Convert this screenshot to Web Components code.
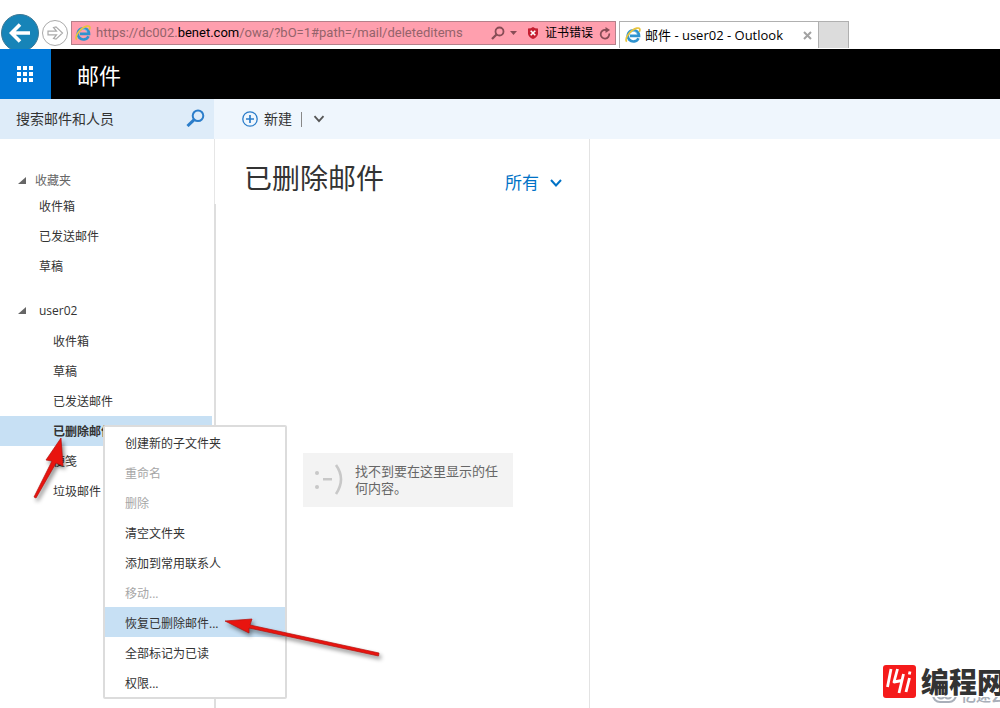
<!DOCTYPE html>
<html lang="zh-CN">
<head>
<meta charset="utf-8">
<title>邮件 - user02 - Outlook</title>
<style>
  html { height: 100%; }
  body {
    margin: 0; min-height: 100%; position: relative; overflow-x: hidden;
    display: flex; flex-direction: column; background: #fff; color: #333;
    font: 12px/20px "Open Sans", "Noto Sans CJK SC", sans-serif;
  }
  main { flex: 1; display: flex; }
</style>
</head>
<body>
<browser-bar>
  <address-bar slot="address"></address-bar>
  <browser-tab slot="tabs">邮件 - user02 - Outlook</browser-tab>
</browser-bar>
<app-header>邮件</app-header>
<command-bar></command-bar>
<main>
  <folder-pane>
    <folder-group label="收藏夹" muted>
      <folder-item>收件箱</folder-item>
      <folder-item>已发送邮件</folder-item>
      <folder-item>草稿</folder-item>
    </folder-group>
    <folder-group label="user02" nested>
      <folder-item>收件箱</folder-item>
      <folder-item>草稿</folder-item>
      <folder-item>已发送邮件</folder-item>
      <folder-item selected>已删除邮件</folder-item>
      <folder-item>便笺</folder-item>
      <folder-item>垃圾邮件</folder-item>
    </folder-group>
  </folder-pane>
  <message-list><span slot="title">已删除邮件</span>找不到要在这里显示的任何内容。</message-list>
</main>
<context-menu>
  <menu-option>创建新的子文件夹</menu-option>
  <menu-option disabled>重命名</menu-option>
  <menu-option disabled>删除</menu-option>
  <menu-option>清空文件夹</menu-option>
  <menu-option>添加到常用联系人</menu-option>
  <menu-option disabled>移动...</menu-option>
  <menu-option active>恢复已删除邮件...</menu-option>
  <menu-option>全部标记为已读</menu-option>
  <menu-option>权限...</menu-option>
</context-menu>
<pointer-arrows></pointer-arrows>
<site-mark></site-mark>

<script>
const base = `:host,*{box-sizing:border-box} button,input,select{font:inherit;color:inherit;background:none;border:0;padding:0;margin:0;border-radius:0} svg{display:block;flex:none}`;

function define(name, build) {
  customElements.define(name, class extends HTMLElement {
    constructor() {
      super();
      this.attachShadow({ mode: 'open' });
    }
    connectedCallback() {
      const t = document.createElement('template');
      t.innerHTML = build(this);
      this.shadowRoot.replaceChildren(t.content.cloneNode(true));
    }
  });
}

define('ie-logo', () => `
  <style>${base} :host{display:block;flex:none}</style>
  <svg width="16" height="16" viewBox="0 0 16 16" fill="none" aria-hidden="true">
    <path d="M13.500 11.200A5.600 5.600 0 1 1 14 8.800H5" stroke="#2f93cf" stroke-width="2.700"/>
    <path d="M4.200 7.200c1-4 7-4 7.600-.4" stroke="#7fcbef" stroke-width="1"/>
    <path d="M1.800 14.600C-1 11.600 5.600 2.600 12 1.100 15 .5 15.500 2.500 14.200 4.800" stroke="#e9c43c" stroke-width="1.700"/>
  </svg>`);

define('browser-bar', () => `
  <style>${base}
    :host{display:flex;height:49px;padding-top:14px;overflow:hidden;align-items:flex-start;background:#fff}
    .back{width:38px;height:38px;margin-left:1px;border-radius:50%;background:#1784b8;border:1px solid #3d7895;display:grid;place-items:center}
    .forward{width:26px;height:26px;margin:6px 3px 0;border-radius:50%;border:1px solid #aaa;display:grid;place-items:center}
    .address{flex:0 1 545px;min-width:0;margin-top:7px}
    .tabs{display:flex;margin:7px 0 0 3px}
    .new{width:30px;height:27px;background:#dcdcdc;border:1px solid #b0b0b0;border-left:0;border-bottom:0}
  </style>
  <button class="back" aria-label="后退"><svg width="22" height="20" viewBox="0 0 22 20" fill="none" stroke="#fff" stroke-width="3.600"><path d="M21 10H3M11 1.500 2.500 10l8.500 8.500"/></svg></button>
  <button class="forward" aria-label="前进"><svg width="17" height="14" viewBox="0 0 17 14" fill="#fff" stroke="#aaa" stroke-width="1.200"><path d="M1 5.200h8.500L6.500 1.500 9 .8 15.500 7 9 13.200l-2.500-.7 3-3.700H1z"/></svg></button>
  <div class="address"><slot name="address"></slot></div>
  <div class="tabs"><slot name="tabs"></slot><button class="new" aria-label="新建标签页"></button></div>`);

define('address-bar', () => `
  <style>${base}
    :host{display:flex;align-items:center;height:24px;padding:0 4px 0 3px;background:#ff9fae;border:1px solid #b5808a;color:#000}
    .url{flex:1;min-width:0;margin-left:5px;white-space:nowrap;overflow:hidden;font-family:Roboto,"Noto Sans CJK SC",sans-serif;font-size:13px;color:#94636b;outline:0}
    b{font-weight:400;color:#000}
    .error{display:flex;align-items:center;gap:6px;margin:0 6px 0 10px}
    .find{display:flex;align-items:center;gap:5px}
  </style>
  <ie-logo></ie-logo>
  <div class="url" role="textbox" contenteditable="true" spellcheck="false" aria-label="地址">https://dc002.<b>benet.com</b>/owa/?bO=1#path=/mail/deleteditems</div>
  <button class="find" aria-label="搜索"><svg width="14" height="14" viewBox="0 0 14 14" fill="none" stroke="#874d56"><circle cx="8.500" cy="5.500" r="4" stroke-width="1.800"/><path d="M5.500 8.500 1 13" stroke-width="2.300"/></svg><svg width="7" height="4" fill="#874d56"><path d="M0 0h7L3.500 4z"/></svg></button>
  <button class="error"><svg width="12" height="12" viewBox="0 0 12 12"><path d="M1 1.500Q4 1.500 6 0q2 1.500 5 1.500V7Q10 10.500 6 12 2 10.500 1 7z" fill="#c51f31"/><path d="m3.700 3.700 4.600 4.600m0-4.600L3.700 8.300" stroke="#fff" stroke-width="1.600"/></svg>证书错误</button>
  <button aria-label="刷新"><svg width="12" height="13" viewBox="0 0 12 13" fill="none" stroke="#874d56" stroke-width="1.800"><path d="M10.200 6.500A4.300 4.300 0 1 1 6.500 3H9"/><path d="M6.500 0v6L11 3z" fill="#874d56" stroke="none"/></svg></button>`);

define('browser-tab', () => `
  <style>${base}
    :host{display:flex;align-items:center;width:200px;height:27px;padding:0 6px 0 5px;border:1px solid #b0b0b0;border-bottom:0;background:#fff;color:#000;font-size:13px}
    .label{flex:1;margin-left:4px;white-space:nowrap}
  </style>
  <ie-logo></ie-logo><span class="label"><slot></slot></span>
  <button aria-label="关闭"><svg width="9" height="9" viewBox="0 0 9 9" stroke="#a2a2a2" stroke-width="2"><path d="m1 1 7 7M8 1 1 8"/></svg></button>`);

define('app-header', () => `
  <style>${base}
    :host{display:flex;height:50px;background:#000;color:#fff;align-items:stretch}
    button{width:51px;padding-right:1px;background:#0078d7;display:grid;place-items:center}
    h1{margin:0 0 0 26px;font-size:22px;line-height:52px;font-weight:400}
  </style>
  <button aria-label="应用启动器"><svg width="16" height="16" viewBox="0 0 16 16" fill="#fff"><path d="M0 0h4v4H0zM6 0h4v4H6zM12 0h4v4h-4zM0 6h4v4H0zM6 6h4v4H6zM12 6h4v4h-4zM0 12h4v4H0zM6 12h4v4H6zM12 12h4v4h-4z"/></svg></button>
  <h1><slot></slot></h1>`);

define('command-bar', () => `
  <style>${base}
    :host{display:flex;height:40px;background:#eff6fd}
    .search{width:214px;display:flex;align-items:center;padding:0 9px 2px 16px;background:#deecf9}
    input{flex:1;min-width:0;height:24px;font-size:14px;outline:0}
    input::placeholder{color:#333;opacity:1}
    .new{display:flex;align-items:center;gap:6px;margin-left:28px;font-size:14px}
    .more{display:flex;align-items:center;gap:11px;margin-left:9px}
    i{width:1px;height:15px;background:#888}
  </style>
  <label class="search"><input type="search" placeholder="搜索邮件和人员" aria-label="搜索邮件和人员">
    <svg width="19" height="18" viewBox="0 0 19 18" fill="none" stroke="#2b7dca"><circle cx="12" cy="6.800" r="5.300" stroke-width="2"/><path d="M8.200 10.600 1.500 17" stroke-width="3"/></svg></label>
  <button class="new"><svg width="16" height="16" viewBox="0 0 16 16" fill="none" stroke="#2b7dca" stroke-width="1.300"><circle cx="8" cy="8" r="7.200"/><path d="M8 4v8M4 8h8" stroke-width="1.700"/></svg>新建</button>
  <button class="more" aria-label="更多新建选项"><i></i><svg width="12" height="8" viewBox="0 0 12 8" fill="none" stroke="#555" stroke-width="1.800"><path d="m1.500 1.200 4.500 5 4.500-5"/></svg></button>`);

define('folder-pane', () => `
  <style>${base}
    :host{display:flex;flex:none;width:216px}
    nav{flex:1;padding-top:32px}
    .rail{width:4px;padding-left:2px}
    .rail::before{content:"";display:block;width:1px;height:65px;background:#e6e6e6}
    .rail::after{content:"";display:block;width:2px;height:calc(100% - 65px);background:#dedede}
  </style>
  <nav aria-label="文件夹"><slot></slot></nav><div class="rail"></div>`);

define('folder-group', el => `
  <style>${base}
    :host{display:block;margin-bottom:15px;--indent:39px}
    :host([nested]){--indent:53px}
    button{display:flex;align-items:center;width:100%;height:30px;padding-left:18px;gap:13px;text-align:left}
    :host([muted]) button{height:20px;gap:9px;color:#666}
  </style>
  <button aria-expanded="true"><svg width="8" height="8" fill="#666"><path d="M8 0v7H0z"/></svg>${el.getAttribute('label')}</button>
  <slot></slot>`);

define('folder-item', () => `
  <style>${base}
    :host{display:block}
    a{display:block;height:30px;line-height:32px;padding-left:var(--indent);color:inherit;text-decoration:none;white-space:nowrap}
    :host([selected]) a{background:#c7e0f4;font-weight:700}
  </style>
  <a href="#"><slot></slot></a>`);

define('message-list', () => `
  <style>${base}
    :host{display:block;flex:0 1 374px;border-right:1px solid #e3e3e3}
    header{display:flex;justify-content:space-between;height:58px;padding:19px 27px 0 28px}
    h2{margin:0;font-size:28px;line-height:40px;font-weight:400}
    .filter{display:flex;align-items:center;gap:9px;padding-top:10px;color:#0072c6}
    select{appearance:none;font-size:17px;line-height:24px;height:26px;width:36px}
    .empty{display:flex;align-items:center;width:210px;height:54px;margin:256px 0 0 87px;padding-left:10px;gap:11px;background:#f3f3f3;color:#666;font-size:13px;line-height:17px}
    p{margin:0;width:147px}
  </style>
  <header><h2><slot name="title"></slot></h2>
    <label class="filter"><select aria-label="筛选"><option>所有</option></select>
    <svg width="12" height="8" viewBox="0 0 12 8" fill="none" stroke="#0072c6" stroke-width="2"><path d="m1 1 5 5.500L11 1"/></svg></label></header>
  <div class="empty"><svg width="31" height="32" viewBox="0 0 31 32" fill="#c8c8c8" aria-hidden="true"><circle cx="4" cy="9" r="2"/><circle cx="4" cy="23" r="2"/><path d="M10 14h9v2.500h-9z"/><path d="M23 1q10 14 0 29" fill="none" stroke="#c8c8c8" stroke-width="2.600"/></svg><p><slot></slot></p></div>`);

define('context-menu', () => `
  <style>${base}
    :host{display:block;position:absolute;left:103px;top:425px;width:184px;background:#fff;border:2px solid #dcdcdc;border-radius:2px}
  </style>
  <div role="menu"><slot></slot></div>`);

define('menu-option', el => `
  <style>${base}
    :host{display:block}
    button{display:block;width:100%;height:30px;line-height:30px;padding:2px 0 0 20px;text-align:left;white-space:nowrap}
    button:disabled{color:#a6a6a6}
    :host([active]) button{background:#c7e0f4}
  </style>
  <button role="menuitem" ${el.hasAttribute('disabled') ? 'disabled' : ''}><slot></slot></button>`);

define('pointer-arrows', () => `
  <style>${base}
    :host{display:block;position:absolute;left:0;top:420px;pointer-events:none}
    svg{filter:drop-shadow(2px 3px 2px #0007)}
  </style>
  <svg width="400" height="260" viewBox="0 420 400 260" fill="#e8140f" stroke="#b5100c" stroke-width=".7" aria-hidden="true">
    <path d="M61 438 46 460l6 1-18 36 2 1 20-35 7 3z"/>
    <path d="m225 621 27-2-2 6 129 28-.5 3L249 628v5z"/>
  </svg>`);

define('site-mark', () => `
  <style>${base}
    :host{display:block;position:absolute;right:0;bottom:0;width:117px;height:43px;overflow:hidden;white-space:nowrap}
    .under{position:absolute;left:49px;top:20px;display:flex;align-items:center;gap:4px;font-size:15px;line-height:20px;font-weight:700;color:#a9afb9}
    .front{position:relative;display:flex;gap:5px;font-size:28px;line-height:34px;font-weight:900;color:#333}
    .front span{background:#fff;height:32px}
  </style>
  <div class="under"><svg width="25" height="16" viewBox="0 0 25 16" fill="none" stroke="#a9afb9" stroke-width="2"><rect x="1" y="1" width="23" height="14" rx="7"/><circle cx="9" cy="8" r="3.500"/><circle cx="16" cy="8" r="3.500"/></svg>亿速云</div>
  <div class="front"><svg width="33" height="33" viewBox="0 0 33 33" aria-hidden="true"><rect width="33" height="33" rx="3" fill="#f51b1b"/><g fill="none" stroke="#fff" stroke-width="2.800" stroke-linejoin="round"><path d="M8 4 4.500 22M14.500 4 11 17l8-1.500M20.500 9 16 28M26.500 13l-3.500 14M27 6.500l-.7 3"/></g></svg><span>编程网</span></div>`);
</script>
</body>
</html>
